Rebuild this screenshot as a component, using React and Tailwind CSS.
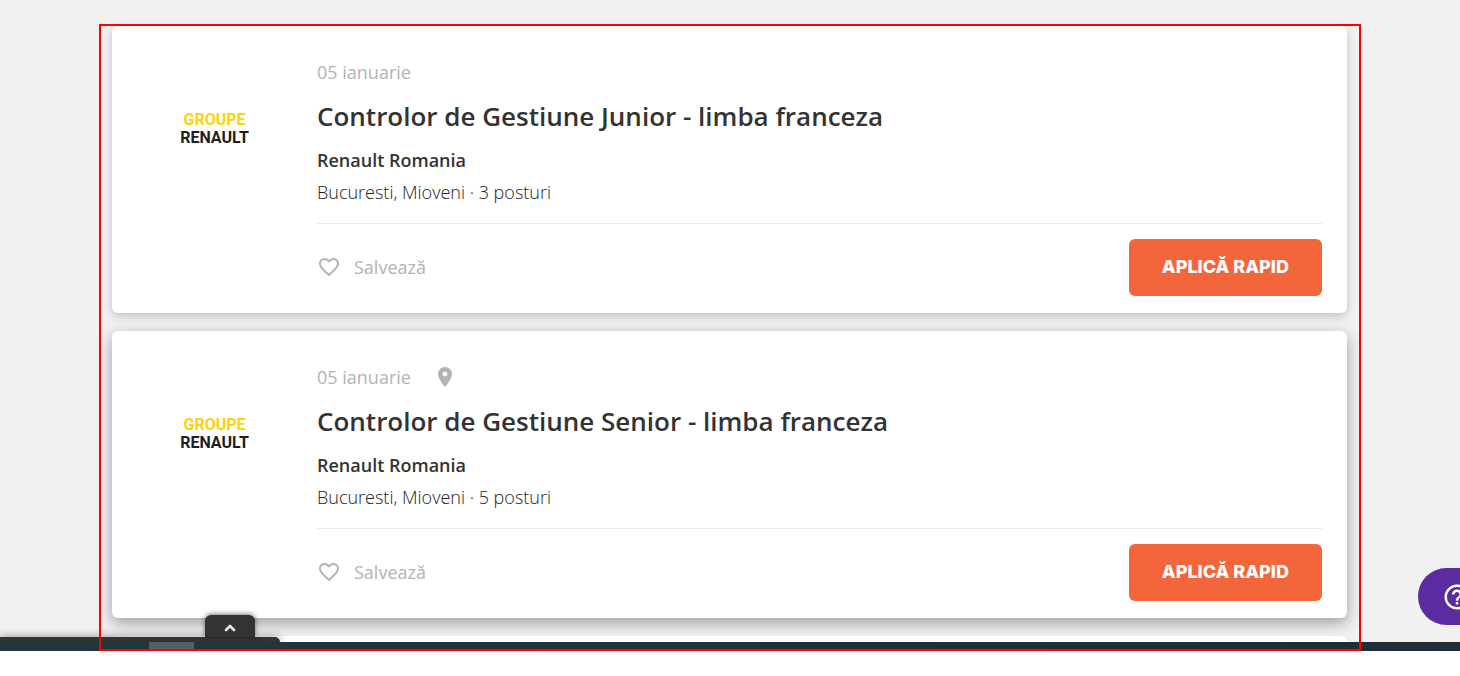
import { MdFavoriteBorder, MdPlace, MdHelpOutline } from "react-icons/md";
import { ChevronUp } from "lucide-react";

const jobs = [
  {
    id: 1,
    date: "05 ianuarie",
    title: "Controlor de Gestiune Junior - limba franceza",
    company: "Renault Romania",
    details: "Bucuresti, Mioveni · 3 posturi",
    pinned: false,
    shadow: "shadow-[0_3px_10px_rgba(0,0,0,0.2)]",
  },
  {
    id: 2,
    date: "05 ianuarie",
    title: "Controlor de Gestiune Senior - limba franceza",
    company: "Renault Romania",
    details: "Bucuresti, Mioveni · 5 posturi",
    pinned: true,
    shadow: "shadow-[0_5px_15px_rgba(0,0,0,0.35)]",
  },
];

function Logo() {
  return (
    <div className="w-[205px] shrink-0 pt-[85px] text-center font-[Roboto,sans-serif] text-base leading-[18px] font-bold">
      <div className="text-[#ffd10a]">GROUPE</div>
      <div className="text-[#231f20]">RENAULT</div>
    </div>
  );
}

function JobCard({ job }) {
  return (
    <article className={`flex rounded-md bg-white pr-[25px] ${job.shadow}`}>
      <Logo />
      <div className="min-w-0 flex-1 pt-[34px] pb-[17px]">
        <div className="flex items-center gap-[22px] text-lg leading-6 text-[#b3b3b3]">
          <span>{job.date}</span>
          {job.pinned && <MdPlace size={24} aria-hidden="true" />}
        </div>
        <h2 className="mt-[14px] text-[26px] leading-9 font-semibold text-[#333]">
          <a href="#">{job.title}</a>
        </h2>
        <p className="mt-[14px] text-lg leading-6 font-semibold text-[#333]">{job.company}</p>
        <p className="mt-2 text-lg leading-6 font-light text-[#222]">{job.details}</p>
        <div className="mt-[19px] flex items-center justify-between border-t border-[#ebebeb] pt-[15px]">
          <button type="button" className="flex items-center gap-[13px] pb-[2px] text-lg leading-6 text-[#b3b3b3]">
            <MdFavoriteBorder size={24} aria-hidden="true" />
            Salvează
          </button>
          <button
            type="button"
            className="h-[57px] rounded-md bg-[#f3663c] px-[33px] pb-[2px] font-[Inter,sans-serif] text-lg leading-6 font-extrabold text-white"
          >
            APLICĂ RAPID
          </button>
        </div>
      </div>
    </article>
  );
}

export default function App() {
  return (
    <div className="relative overflow-hidden bg-[#f1f1f1] font-['Open_Sans',sans-serif]">
      <main className="relative overflow-hidden pt-[26px] pr-[113px] pl-[112px]">
        <div className="flex flex-col gap-[18px]">
          {jobs.map((job) => (
            <JobCard key={job.id} job={job} />
          ))}
          <div className="h-[6px] rounded-t-md bg-white" />
        </div>
        <div className="absolute bottom-0 left-0 h-[5px] w-[280px] rounded-tr-md bg-[#333] shadow-[0_0_8px_rgba(0,0,0,0.5)]" />
        <button
          type="button"
          aria-label="Deschide"
          className="absolute bottom-[5px] left-[205px] flex h-[22px] w-[50px] items-center justify-center rounded-t-md bg-[#333] pt-1 text-[#e6e6e6] shadow-[0_-1px_5px_rgba(0,0,0,0.5)]"
        >
          <ChevronUp size={16} strokeWidth={4} aria-hidden="true" />
        </button>
      </main>
      <footer className="h-[9px] bg-linear-to-r from-[#233740] to-[#1f2c35] pl-[149px]">
        <div className="h-full w-[45px] bg-[#525f69]" />
      </footer>
      <button
        type="button"
        aria-label="Ajutor"
        className="absolute right-0 bottom-[26px] flex h-[57px] w-[42px] items-center rounded-l-full bg-[#5b2ca0] pl-6 text-white"
      >
        <MdHelpOutline size={30} className="shrink-0" aria-hidden="true" />
      </button>
      <div className="pointer-events-none absolute inset-x-[99px] top-6 bottom-0 border-2 border-[#ff0000]" />
    </div>
  );
}
